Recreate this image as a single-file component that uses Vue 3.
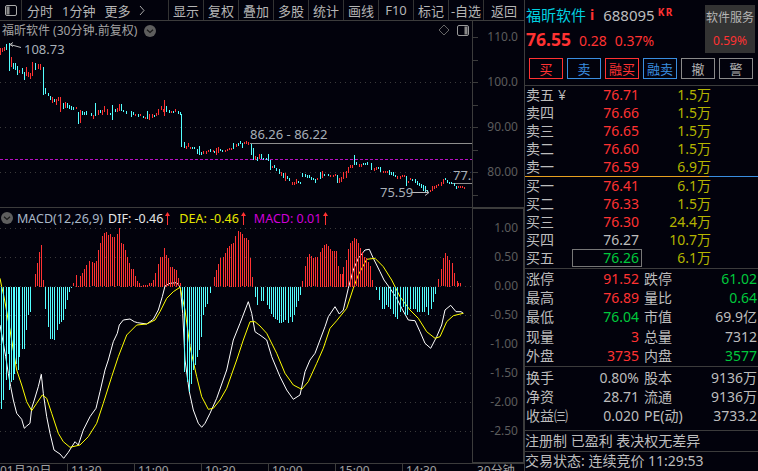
<template>
  <div class="terminal">
    <section class="left">
      <nav class="toolbar">
        <div class="tool-icon">
          <svg width="12" height="11" viewBox="0 0 12 11">
            <rect x="0.5" y="0.5" width="11" height="10" rx="1.5" fill="none" stroke="#aaa" />
            <rect x="1.5" y="1.5" width="3" height="8" fill="#888" />
          </svg>
        </div>
        <div class="tool-periods">
          <span>分时</span>
          <span>1分钟</span>
          <span>更多</span>
          <svg width="6" height="11" viewBox="0 0 6 11">
            <path d="M1 1l4 4.500l-4 4.500" fill="none" stroke="#aaa" />
          </svg>
        </div>
        <button v-for="item in tools" :key="item" type="button">{{ item }}</button>
      </nav>

      <div class="main-chart">
        <svg class="chart-svg" width="524" height="186" viewBox="0 21 524 186">
          <line v-for="y in mainGrid" :key="y" x1="0" x2="472" :y1="y + 0.5" :y2="y + 0.5" class="dots" />
          <line x1="0" x2="472" y1="159.500" y2="159.500" stroke="#b80fc4" stroke-dasharray="3 2" />
          <line x1="250" x2="472" y1="143.500" y2="143.500" stroke="#8e8e8e" />
          <line x1="451" x2="472" y1="183.500" y2="183.500" stroke="#8e8e8e" />
          <rect
            v-for="(candle, index) in candles"
            :key="index"
            :x="candle.x"
            :y="candle.top"
            width="1"
            :height="candle.height"
            :fill="candle.up ? '#ff3232' : '#54ffff'"
            shape-rendering="crispEdges"
          />
          <path d="M10 44.500L21 47.500M10 44.500l3-2M10 44.500l3 2" fill="none" stroke="#bbb" />
          <path d="M412 192.500H429M429 192.500l-4-3M429 192.500l-4 3" fill="none" stroke="#bbb" />
          <text x="24" y="54" class="mark">108.73</text>
          <text x="250" y="139" class="mark">86.26 - 86.22</text>
          <text x="380" y="197" class="mark">75.59</text>
          <text x="453" y="180" class="mark">77.3</text>
          <rect x="472" y="21" width="52" height="186" fill="#02020c" />
          <line x1="472.500" x2="472.500" y1="21" y2="207" stroke="#3c3c3c" />
          <line v-for="y in mainTicks" :key="y" x1="473" x2="478" :y1="y + 0.5" :y2="y + 0.5" stroke="#3c3c3c" />
          <text v-for="label in mainLabels" :key="label.text" x="518" :y="label.y" class="axis">{{ label.text }}</text>
        </svg>

        <div class="chart-title">
          <span>福昕软件 (30分钟.前复权)</span>
          <svg width="12" height="12" viewBox="0 0 12 12">
            <circle cx="6" cy="6" r="6" fill="#5e5e5e" />
            <path d="M3 4.800l3 2.600l3-2.600" fill="none" stroke="#1a1a1a" stroke-width="1.300" />
          </svg>
        </div>
        <div class="chart-corner">
          <svg width="12" height="12" viewBox="0 0 12 12">
            <path d="M6 1l5 5l-5 5l-5-5z" fill="none" stroke="#666" />
          </svg>
          <svg width="12" height="11" viewBox="0 0 12 11">
            <rect x="0.500" y="0.500" width="11" height="10" rx="1.500" fill="none" stroke="#999" />
            <rect x="7.500" y="1.500" width="3" height="8" fill="#888" />
          </svg>
        </div>
      </div>

      <div class="macd-chart">
        <svg class="chart-svg" width="524" height="256" viewBox="0 207 524 256">
          <line x1="0" x2="524" y1="207.500" y2="207.500" stroke="#3c3c3c" />
          <line v-for="row in macdAxis" :key="row.text" x1="0" x2="472" :y1="row.y + 0.5" :y2="row.y + 0.5" class="dots" />
          <polyline :points="difPoints" fill="none" stroke="#fff" />
          <polyline :points="deaPoints" fill="none" stroke="#ffff00" />
          <rect
            v-for="(bar, index) in macdBars"
            :key="index"
            :x="bar.x"
            :y="bar.top"
            width="1"
            :height="bar.height"
            :fill="bar.up ? '#ff3232' : '#54ffff'"
            shape-rendering="crispEdges"
          />
          <rect x="472.500" y="208.500" width="51" height="254" fill="#02020c" stroke="#3c3c3c" />
          <text v-for="row in macdAxis" :key="row.text" x="518" :y="row.y + 4" class="axis">{{ row.text }}</text>
        </svg>

        <div class="macd-title">
          <svg width="12" height="12" viewBox="0 0 12 12">
            <circle cx="6" cy="6" r="6" fill="#5e5e5e" />
            <path d="M3 4.800l3 2.600l3-2.600" fill="none" stroke="#1a1a1a" stroke-width="1.300" />
          </svg>
          <span class="macd-name">MACD(12,26,9)</span>
          <span v-for="item in macdValues" :key="item.label" class="macd-value" :class="item.cls">
            {{ item.label }}: {{ item.value }}
            <svg width="5" height="13" viewBox="0 0 5 13">
              <path d="M2.500 0L5 4H3V13H2V4H0z" fill="#ff3232" />
            </svg>
          </span>
        </div>
      </div>

      <footer class="time-axis">
        <span v-for="time in times" :key="time">{{ time }}</span>
        <em>30分钟</em>
      </footer>
    </section>

    <aside class="quote">
      <header class="quote-head">
        <div class="quote-info">
          <div class="stock-name">
            <strong>福昕软件</strong><i>i</i><span>688095</span><sup>KR</sup>
          </div>
          <div class="stock-price">
            <b>76.55</b><span>0.28</span><span>0.37%</span>
          </div>
        </div>
        <div class="sector">
          <span>软件服务</span>
          <b>0.59%</b>
        </div>
      </header>

      <div class="actions">
        <button v-for="action in actions" :key="action.text" type="button" :class="action.cls">{{ action.text }}</button>
      </div>

      <div class="book sell">
        <div v-for="row in sells" :key="row.name" class="book-row">
          <label>{{ row.name }}<small v-if="row.yen">¥</small></label>
          <span class="up">{{ row.price }}</span>
          <span class="vol">{{ row.volume }}</span>
        </div>
      </div>

      <div class="book buy">
        <div v-for="row in buys" :key="row.name" class="book-row">
          <label>{{ row.name }}</label>
          <span :class="[row.cls, { boxed: row.boxed }]">{{ row.price }}</span>
          <span class="vol">{{ row.volume }}</span>
        </div>
      </div>

      <div class="stats first">
        <div v-for="row in statsA" :key="row[0]" class="stat-row">
          <label>{{ row[0] }}</label>
          <span :class="row[2]">{{ row[1] }}</span>
          <label>{{ row[3] }}</label>
          <span :class="row[5]">{{ row[4] }}</span>
        </div>
      </div>

      <div class="stats second">
        <div v-for="row in statsB" :key="row[0]" class="stat-row">
          <label>{{ row[0] }}</label>
          <span>{{ row[1] }}</span>
          <label>{{ row[2] }}</label>
          <span>{{ row[3] }}</span>
        </div>
      </div>

      <div class="line-note">注册制 已盈利 表决权无差异</div>
      <div class="line-note status">交易状态: 连续竞价 11:29:53</div>
    </aside>
  </div>
</template>

<script setup>
const tools = ['显示', '复权', '叠加', '多股', '统计', '画线', 'F10', '标记', '-自选', '返回']
const times = ['01月20日', '11:30', '11:00', '10:30', '10:00', '15:00', '14:30']

const mainGrid = [82, 127, 172]
const mainTicks = [37, 60, 82, 105, 127, 150, 172, 195]
const mainLabels = [
  { text: '110.0', y: 41 },
  { text: '100.0', y: 86 },
  { text: '90.00', y: 131 },
  { text: '80.00', y: 176 }
]

const macdAxis = [
  { text: '1.00', y: 228 },
  { text: '0.50', y: 257 },
  { text: '0.00', y: 286 },
  { text: '-0.50', y: 315 },
  { text: '-1.00', y: 344 },
  { text: '-1.50', y: 373 },
  { text: '-2.00', y: 402 },
  { text: '-2.50', y: 431 }
]

const macdValues = [
  { label: 'DIF', value: '-0.46', cls: 'dif' },
  { label: 'DEA', value: '-0.46', cls: 'dea' },
  { label: 'MACD', value: '0.01', cls: 'hist' }
]

// candles read from the chart at 3x: r/c px:top-bottom, offset by the crop origin
const parseCandles = (originX, originY, text) => {
  return text.trim().split(/\s+/).map((item) => {
    const [, kind, px, top, bottom] = item.match(/([rc])(\d+):(\d+)-(\d+)/)

    return {
      x: Math.round(originX + px / 3),
      top: Math.round(originY + top / 3),
      height: Math.max(2, Math.round((bottom - top) / 3)),
      up: kind === 'r'
    }
  })
}

const candles = [
  ...parseCandles(0, 40, `
    r0:25-45 r6:25-37 r12:20-32 c18:13-30 c27:10-95 r33:50-80 c39:70-87 c45:70-90
    c51:78-105 r57:90-100 c66:83-100 r78:82-108 c72:95-120 r84:95-110 r90:100-118
    r97:67-108 c105:70-92 r113:72-88 r120:72-90 c129:80-165 c136:145-162 c144:160-170
    c151:168-180 r157:172-190 c163:177-187 r169:177-195 r175:170-182 r181:172-218
    c189:188-205 r195:186-205 c201:190-205 c207:195-208 c213:198-210 c219:200-210
    r228:201-207 c235:215-252 r241:210-250 c247:213-225 c253:215-225 c259:213-225
  `),
  ...parseCandles(90, 90, `
    c3:70-80 r10:75-87 c16:40-80 r24:60-75 c30:60-68 r37:60-75 r43:48-65 r50:57-75
    c60:68-75 c67:45-90 c74:58-68 r81:55-68 r88:42-62 c93:42-62 c100:60-67 c107:62-70
    c122:63-80 c128:67-77 r136:73-80 c143:72-80 r150:73-78 c158:78-84 r164:80-85
    c172:63-87 r178:73-90 r186:73-85 c192:74-78 r199:68-78 r205:57-74 r212:48-60
    r218:58-67 r223:30-78 c229:48-65 c236:60-70 r243:62-67 c250:62-68 r256:57-67
    c263:62-72 c269:66-75 c274:72-172 c283:156-175 r289:168-177 r295:160-173
    r301:170-175 c307:172-178 c313:170-176 c320:178-192 c327:168-195 c333:187-197
    r340:184-192 r347:182-190 r354:180-186 c361:178-186 r368:180-187 c373:183-190
    r379:175-195 r385:170-187 c391:178-183 c397:180-186 r405:180-184 r411:176-182
    r417:174-179 r423:175-180 c430:160-178 r438:163-173 c445:158-168 c451:153-163
    c457:158-173 r463:155-162 r469:153-160 r475:155-162
  `),
  ...parseCandles(240, 135, `
    c0:18-28 c6:24-38 r12:22-28 r18:18-26 r24:20-28 c34:27-60 c40:40-75 r46:63-75
    c52:67-78 r58:56-70 c64:56-70 c70:68-75 c78:68-75 c84:57-78 c91:75-105 r97:93-100
    c103:90-100 c109:98-108 c118:102-118 r124:112-124 c130:113-128 r136:115-138
    c142:123-132 c148:130-140 r157:140-150 r163:140-150 r169:132-146 c175:138-145
    c181:140-145 c187:115-128 c195:118-128 c201:120-130 c207:120-130 c213:126-134
    c219:130-136 c225:132-145 r231:128-134 c240:112-132 r246:108-128 c252:117-123
    c264:117-122 r270:120-123 r278:120-123 r285:118-123 c292:120-145 r298:128-142
    r304:125-140 r310:110-130 r318:108-128 r324:95-113 r331:90-100
  `),
  ...parseCandles(350, 135, `
    r0:90-100 r6:90-100 c13:60-90 c19:82-90 r28:88-96 r34:87-95 c40:85-90 c46:83-90
    c52:82-90 c63:85-105 r72:98-107 r78:96-104 c85:96-102 c91:96-112 r100:108-113
    r106:108-113 r112:108-113 c118:105-120 c124:110-120 c130:110-122 c136:120-124
    r142:122-132 r150:122-132 r157:120-126 r163:120-124 c169:123-152 r175:138-143
    r181:130-137 c187:133-137 c195:132-145 c201:138-150 c207:143-153 c213:148-160
    c219:150-168 c225:153-172 c231:165-175 r240:166-172 r247:153-168 r253:153-163
    r259:150-160 r265:148-155 r273:140-152 r279:132-148 c285:128-135 c291:135-145
    c297:140-147 c303:142-148 c312:145-155 c318:152-162 r324:153-160 r330:152-158
    r336:153-160 r342:156-163
  `)
]

const parseBars = (originX, list) => {
  return list.map(([px, end]) => {
    const up = end < 260

    return {
      x: Math.round(originX + px / 3),
      top: Math.round(200 + Math.min(end, 260) / 3),
      height: Math.max(1, Math.round(Math.abs(end - 260) / 3)),
      up
    }
  })
}

const macdBars = [
  ...parseBars(0, [
    [3, 625], [10, 600], [17, 540], [23, 460], [28, 570], [33, 545], [38, 540], [43, 520], [48, 490], [53, 510],
    [58, 470], [66, 445], [72, 445], [78, 390], [84, 345], [90, 335], [105, 222], [112, 190], [118, 155], [124, 135],
    [130, 240], [136, 325], [145, 380], [151, 415], [157, 415], [163, 420], [170, 390], [176, 370], [182, 365],
    [188, 360], [195, 325], [201, 298], [207, 275], [213, 262], [220, 250], [228, 225], [235, 258], [241, 228],
    [247, 218], [253, 208], [259, 195], [268, 183], [275, 187], [281, 190], [288, 183], [294, 150], [300, 130],
    [307, 108], [312, 100], [318, 95], [324, 105], [330, 103], [335, 112], [342, 110], [350, 103], [358, 85],
    [364, 128], [370, 132], [376, 150], [382, 170], [388, 190], [394, 207], [400, 208], [406, 228], [412, 243],
    [418, 248], [424, 258], [430, 255], [436, 255], [442, 255], [448, 250], [454, 250], [460, 240], [466, 220],
    [473, 192], [479, 170], [485, 170], [492, 145], [498, 165], [504, 175], [510, 200], [516, 200], [522, 208],
    [528, 210], [534, 235], [540, 250], [546, 330], [553, 515], [560, 545], [566, 575], [572, 550], [578, 510],
    [584, 495], [590, 470], [596, 450], [604, 410], [610, 345], [616, 320], [622, 310], [630, 278], [642, 232],
    [648, 210], [654, 192], [660, 175], [668, 170], [676, 158], [682, 145], [688, 138], [694, 132], [700, 128],
    [706, 108], [714, 93], [720, 95], [726, 103], [732, 113], [738, 115], [745, 120], [751, 175], [757, 230],
    [765, 290], [772, 315]
  ]),
  ...parseBars(260, [
    [3, 303], [9, 303], [20, 315], [26, 325], [33, 340], [39, 350], [46, 355], [52, 360], [58, 368], [64, 368],
    [70, 365], [76, 360], [84, 368], [90, 350], [96, 365], [102, 345], [108, 320], [114, 303], [120, 283], [127, 243],
    [135, 197], [142, 170], [148, 163], [154, 167], [160, 175], [166, 172], [172, 170], [180, 155], [186, 143],
    [192, 135], [198, 132], [204, 138], [210, 148], [216, 152], [222, 152], [228, 152], [234, 197], [240, 222],
    [246, 222], [250, 200], [258, 180], [264, 148], [270, 128], [276, 122], [283, 114], [289, 118], [295, 128],
    [301, 143], [307, 155], [313, 170], [319, 175], [325, 185], [331, 198], [335, 240], [349, 270], [357, 300],
    [365, 325], [371, 325], [378, 315], [384, 320], [390, 325], [398, 340], [405, 350], [411, 355], [420, 335],
    [428, 320], [436, 345], [442, 343], [450, 325], [460, 325], [466, 325], [472, 335], [478, 335], [485, 335],
    [491, 335], [498, 320], [505, 345], [512, 325], [518, 305], [524, 282], [535, 237], [544, 208], [550, 175],
    [556, 160], [562, 168], [568, 180], [576, 190], [582, 220], [590, 243], [595, 250], [601, 250]
  ])
]

const toPoints = (left, right) => {
  const a = left.map(([px, py]) => `${(px / 3).toFixed(1)},${(200 + py / 3).toFixed(1)}`)
  const b = right.map(([px, py]) => `${(260 + px / 3).toFixed(1)},${(200 + py / 3).toFixed(1)}`)

  return [...a, ...b].join(' ')
}

const difPoints = toPoints(
  [
    [0, 375], [10, 430], [17, 470], [25, 520], [32, 560], [40, 600], [50, 640], [65, 658], [73, 685], [80, 678],
    [90, 670], [95, 625], [103, 600], [115, 560], [124, 523], [130, 580], [140, 650], [150, 700], [162, 750],
    [180, 762], [191, 775], [205, 757], [225, 725], [235, 735], [250, 690], [270, 650], [288, 625], [300, 575],
    [315, 510], [325, 480], [340, 425], [352, 400], [358, 375], [370, 360], [390, 357], [403, 365], [413, 368],
    [440, 372], [460, 358], [475, 330], [487, 290], [495, 258], [510, 250], [530, 248], [541, 262], [548, 340],
    [555, 480], [568, 575], [580, 630], [595, 670], [605, 682], [615, 670], [630, 640], [650, 595], [680, 510],
    [700, 420], [720, 370], [745, 305], [755, 340], [765, 395], [775, 402]
  ],
  [
    [0, 405], [20, 420], [35, 470], [60, 530], [80, 570], [100, 598], [120, 585], [135, 515], [150, 480], [165, 460],
    [180, 420], [195, 380], [205, 350], [225, 320], [238, 342], [250, 330], [265, 265], [280, 210], [295, 175],
    [315, 150], [328, 148], [340, 175], [360, 215], [372, 240], [390, 265], [410, 295], [425, 325], [445, 360],
    [465, 362], [480, 395], [495, 430], [512, 445], [530, 410], [545, 375], [555, 330], [572, 316], [588, 335],
    [603, 335], [610, 340]
  ]
)

const deaPoints = toPoints(
  [
    [0, 235], [5, 260], [12, 290], [30, 390], [40, 450], [50, 510], [65, 555], [80, 605], [95, 632], [110, 610],
    [127, 585], [140, 595], [155, 640], [175, 700], [190, 725], [210, 742], [240, 735], [265, 710], [290, 670],
    [310, 610], [335, 530], [355, 470], [380, 405], [410, 375], [440, 372], [465, 360], [480, 335], [500, 295],
    [520, 275], [540, 262], [555, 330], [570, 440], [590, 530], [605, 590], [625, 628], [640, 625], [660, 600],
    [680, 565], [710, 480], [730, 420], [750, 365], [765, 365], [780, 378]
  ],
  [
    [20, 400], [50, 460], [75, 520], [100, 555], [125, 568], [145, 545], [170, 490], [190, 445], [210, 385],
    [230, 362], [260, 325], [280, 265], [295, 225], [320, 178], [345, 175], [370, 200], [395, 240], [420, 290],
    [450, 330], [475, 355], [500, 395], [525, 415], [540, 410], [560, 365], [580, 347], [610, 340]
  ]
)

const actions = [
  { text: '买', cls: 'red' },
  { text: '卖', cls: 'blue' },
  { text: '融买', cls: 'red' },
  { text: '融卖', cls: 'blue' },
  { text: '撤', cls: 'grey' },
  { text: '警', cls: 'grey' }
]

const sells = [
  { name: '卖五', price: '76.71', volume: '1.5万', yen: true },
  { name: '卖四', price: '76.66', volume: '1.5万' },
  { name: '卖三', price: '76.65', volume: '1.5万' },
  { name: '卖二', price: '76.60', volume: '1.5万' },
  { name: '卖一', price: '76.59', volume: '6.9万' }
]

const buys = [
  { name: '买一', price: '76.41', volume: '6.1万', cls: 'up' },
  { name: '买二', price: '76.33', volume: '1.5万', cls: 'up' },
  { name: '买三', price: '76.30', volume: '24.4万', cls: 'up' },
  { name: '买四', price: '76.27', volume: '10.7万', cls: 'flat' },
  { name: '买五', price: '76.26', volume: '6.1万', cls: 'down', boxed: true }
]

const statsA = [
  ['涨停', '91.52', 'up', '跌停', '61.02', 'down'],
  ['最高', '76.89', 'up', '量比', '0.64', 'down'],
  ['最低', '76.04', 'down', '市值', '69.9亿', 'flat'],
  ['现量', '3', 'up', '总量', '7312', 'flat'],
  ['外盘', '3735', 'up', '内盘', '3577', 'down']
]

const statsB = [
  ['换手', '0.80%', '股本', '9136万'],
  ['净资', '28.71', '流通', '9136万'],
  ['收益㈢', '0.020', 'PE(动)', '3733.2']
]
</script>

<style scoped>
.terminal {
  display: flex;
  width: 758px;
  height: 471px;
  overflow: hidden;
  background: #02020c;
  color: #bdbdbd;
  font-family: "Noto Sans", "Noto Sans CJK SC", sans-serif;
}

.left {
  display: flex;
  width: 525px;
  flex: none;
  flex-direction: column;
  border-right: 1px solid #3c3c3c;
  box-sizing: border-box;
}

.toolbar {
  display: flex;
  height: 21px;
  flex: none;
  align-items: stretch;
  border-bottom: 1px solid #3c3c3c;
  box-sizing: border-box;
  font-size: 13px;
}

.tool-icon {
  display: flex;
  width: 22px;
  align-items: center;
  justify-content: center;
  border-right: 1px solid #333;
  box-sizing: border-box;
}

.tool-periods {
  display: flex;
  width: 146px;
  align-items: center;
  gap: 9px;
  padding-left: 5px;
  box-sizing: border-box;
  color: #b5b5b5;
}

.toolbar button {
  width: 35px;
  padding: 0;
  background: none;
  border: 0;
  border-left: 1px solid #333;
  color: #b5b5b5;
  font: inherit;
  white-space: nowrap;
}

.toolbar button:last-child {
  width: 41px;
}

.main-chart,
.macd-chart {
  position: relative;
  flex: none;
}

.main-chart {
  height: 186px;
}

.macd-chart {
  height: 256px;
}

.chart-svg {
  display: block;
  font-family: "Noto Sans", "Noto Sans CJK SC", sans-serif;
}

.dots {
  stroke: #3a3a3a;
  stroke-dasharray: 1 4;
}

.mark {
  fill: #a8b0b8;
  font-size: 13px;
}

.axis {
  fill: #5c5c5c;
  font-size: 12px;
  text-anchor: end;
}

.chart-title {
  position: absolute;
  top: 1px;
  left: 2px;
  display: flex;
  align-items: center;
  gap: 7px;
  color: #a3a3a3;
  font-size: 12px;
  line-height: 18px;
}

.chart-corner {
  position: absolute;
  top: 3px;
  left: 438px;
  display: flex;
  align-items: center;
  gap: 7px;
}

.macd-title {
  position: absolute;
  top: 1px;
  left: 0;
  display: flex;
  height: 20px;
  align-items: center;
  font-size: 12.5px;
  padding-left: 1px;
  white-space: nowrap;
}

.macd-name {
  margin-left: 4px;
  color: #a8b8c8;
}

.macd-value {
  display: inline-flex;
  align-items: center;
  gap: 2px;
  margin-left: 5px;
}

.dif {
  color: #e6e6e6;
}

.dea {
  margin-left: 9px;
  color: #e6e600;
}

.hist {
  margin-left: 8px;
  color: #d000d8;
}

.time-axis {
  display: flex;
  height: 8px;
  flex: none;
  overflow: hidden;
  border-top: 1px solid #3c3c3c;
  box-sizing: border-box;
  color: #a0a0a0;
  font-size: 12px;
  line-height: 14px;
}

.time-axis span {
  width: 67px;
  flex: none;
  padding-left: 3px;
  border-left: 1px solid #3c3c3c;
  box-sizing: border-box;
}

.time-axis span:first-child {
  border-left: 0;
  padding-left: 0;
}

.time-axis em {
  margin-left: 8px;
  font-style: normal;
}

.quote {
  width: 233px;
  flex: none;
  font-size: 14px;
}

.quote-head {
  display: flex;
  height: 57px;
  justify-content: space-between;
  padding: 4px 3px 0 1px;
  box-sizing: border-box;
}

.stock-name {
  display: flex;
  align-items: flex-start;
  height: 23px;
  line-height: 22px;
  font-size: 15px;
}

.stock-name strong {
  color: #00d0e0;
  font-size: 15px;
  font-weight: 400;
}

.stock-name i {
  margin: 0 9px 0 4px;
  color: #ff3232;
  font-size: 14px;
  font-style: normal;
  font-weight: 700;
}

.stock-name sup {
  margin-left: 3px;
  color: #ff3232;
  font-size: 10px;
  font-weight: 700;
  letter-spacing: 1.5px;
  line-height: 16px;
}

.stock-price {
  display: flex;
  align-items: baseline;
  gap: 8px;
  height: 24px;
  line-height: 24px;
  color: #ff3232;
  font-size: 14px;
}

.stock-price b {
  font-size: 17.5px;
}

.sector {
  display: flex;
  width: 50px;
  height: 48px;
  flex-direction: column;
  align-items: center;
  justify-content: space-between;
  margin-top: 1px;
  padding: 3px 0 4px;
  box-sizing: border-box;
  background: #333;
  color: #b5b5b5;
  font-size: 12px;
}

.sector b {
  color: #ff3232;
  font-weight: 400;
}

.actions {
  display: flex;
  height: 29px;
  gap: 4px;
  padding: 1px 0 0 4px;
  box-sizing: border-box;
  border-bottom: 1px solid #3c3c3c;
}

.actions button {
  width: 34px;
  height: 21px;
  padding: 0;
  background: none;
  border: 1px solid;
  font: inherit;
  font-size: 13px;
  line-height: 18px;
}

.actions .red {
  border-color: #ff3232;
  color: #ff3232;
}

.actions .blue {
  border-color: #3a8ee0;
  color: #3a8ee0;
}

.actions .grey {
  border-color: #8a8a8a;
  color: #b0b0b0;
}

.book-row {
  display: grid;
  height: 18px;
  grid-template-columns: 46px 67px 72px;
  padding-left: 1px;
  line-height: 18px;
  text-align: right;
}

.book-row label {
  text-align: left;
  white-space: nowrap;
}

.book-row small {
  margin-left: 4px;
  font-size: 14px;
}

.sell {
  background: linear-gradient(#e8a020, #e8a020) left bottom / 184px 1px no-repeat,
    linear-gradient(#3a8ee0, #3a8ee0) right bottom / 49px 1px no-repeat;
  padding-bottom: 1px;
}

.buy {
  padding: 0 0 1px;
  border-bottom: 1px solid #3c3c3c;
}

.boxed {
  margin-right: -3px;
  padding-right: 3px;
  outline: 1px solid #777;
  outline-offset: -1px;
}

.up {
  color: #ff3232;
}

.down {
  color: #00c83c;
}

.flat {
  color: #bdbdbd;
}

.vol {
  color: #b4b400;
}

.stats {
  border-bottom: 1px solid #3c3c3c;
}

.first {
  padding: 0 0 1px;
}

.second {
  padding: 1px 0 4px;
}

.stat-row {
  display: grid;
  height: 19.200px;
  grid-template-columns: 46px 67px 40px 78px;
  padding-left: 1px;
  line-height: 19px;
  text-align: right;
  white-space: nowrap;
}

.stat-row label {
  text-align: left;
}

.stat-row label:nth-of-type(2) {
  padding-left: 5px;
}

.line-note {
  height: 21px;
  border-bottom: 1px solid #3c3c3c;
  box-sizing: border-box;
  line-height: 19px;
  white-space: nowrap;
}

.status {
  border-bottom: 0;
  line-height: 17px;
}
</style>

<style>
html,
body {
  background: #02020c;
}
</style>
